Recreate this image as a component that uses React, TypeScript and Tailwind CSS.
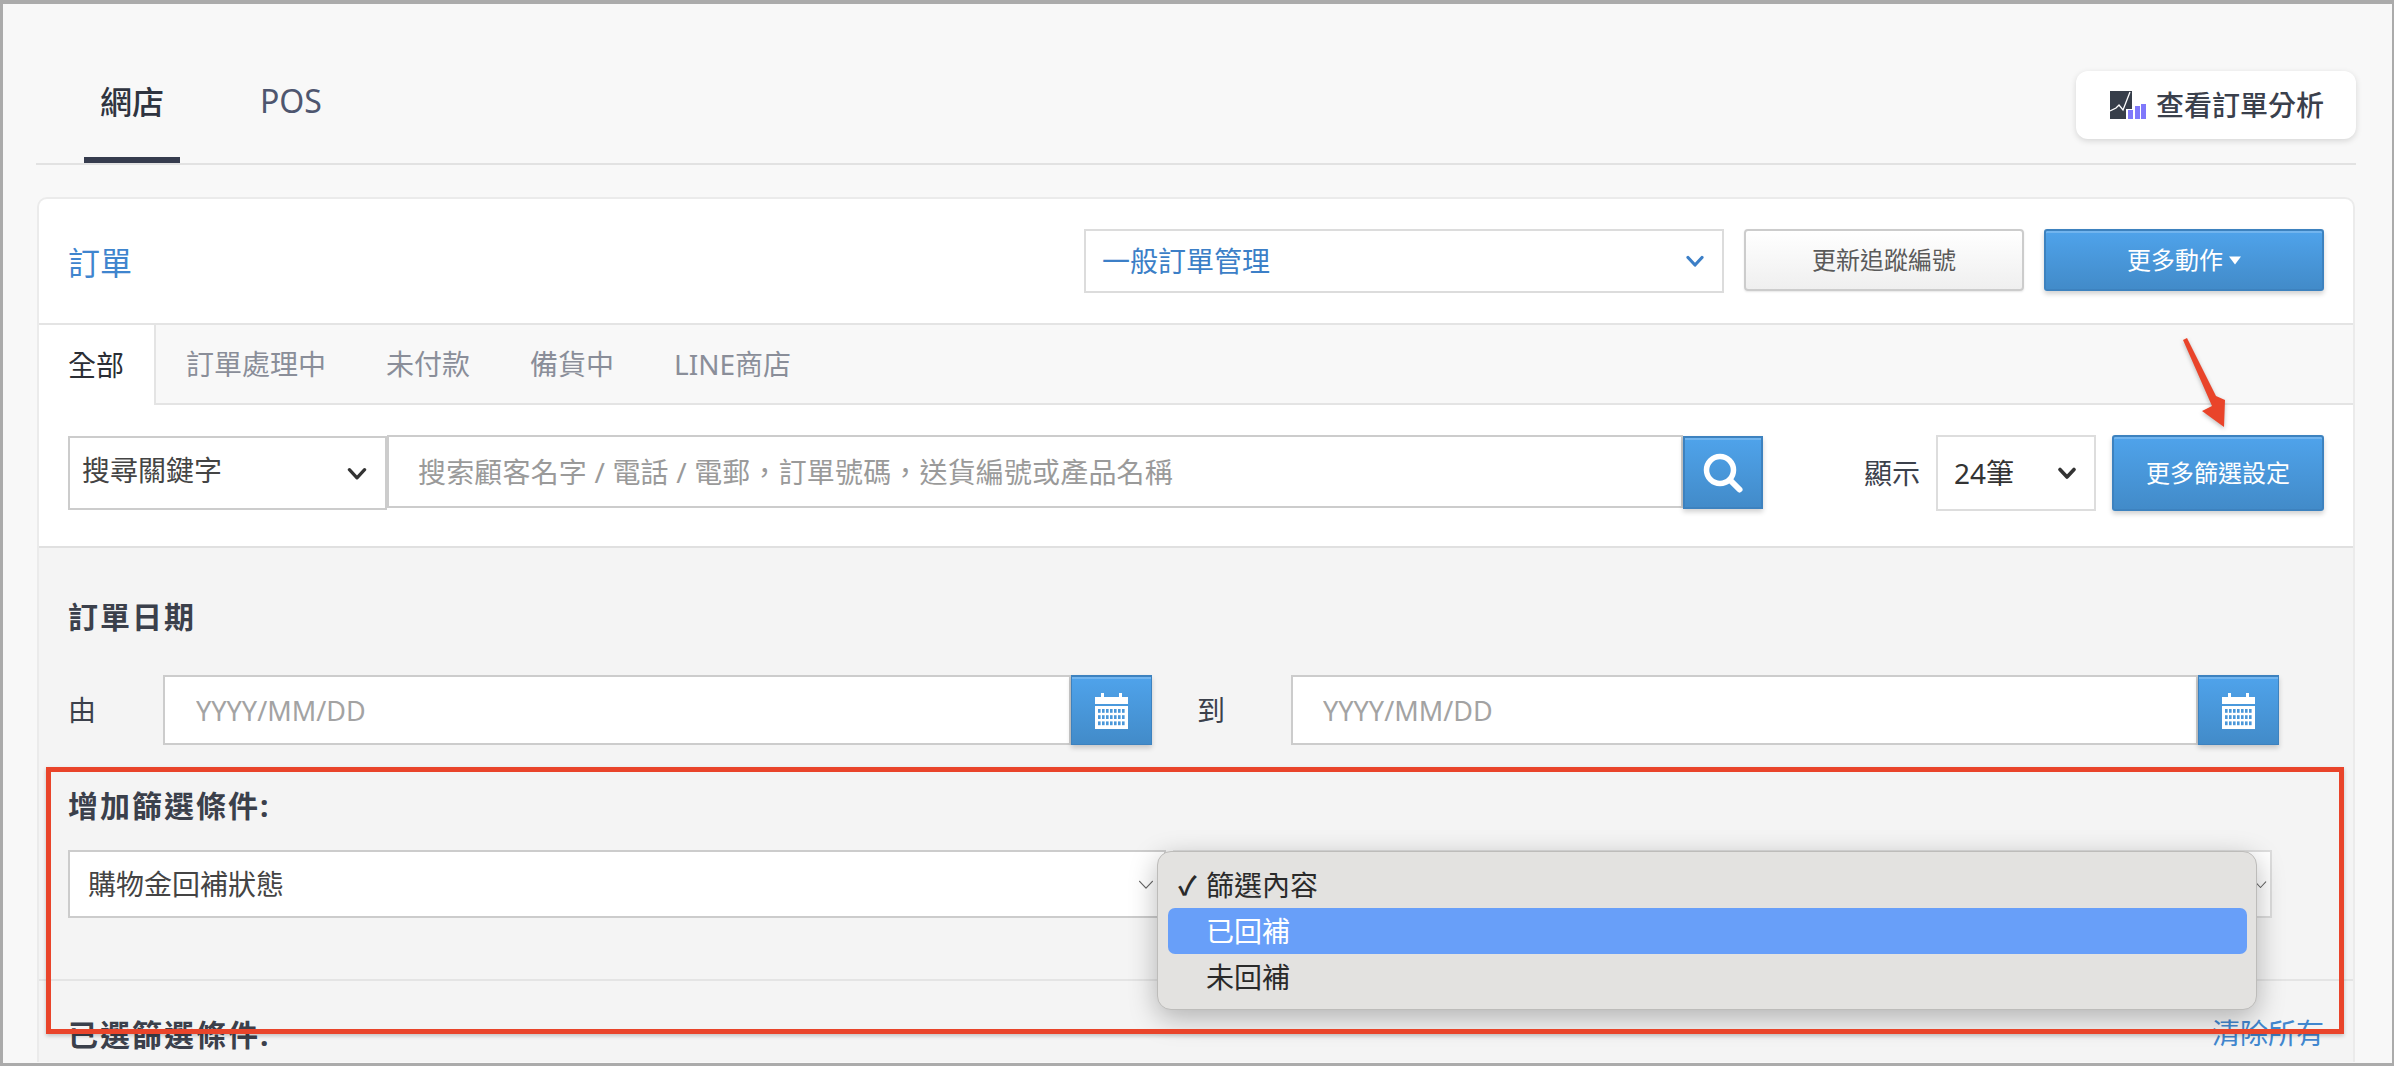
import React from "react";

const blueBtn =
  "box-border rounded-[3px] border-2 border-[#3d82bf] bg-linear-to-b from-[#4fa3eb] to-[#428bc9] text-white shadow-[inset_0_2px_0_rgba(255,255,255,0.2),0_3px_5px_rgba(0,0,0,0.18)] flex items-center justify-center";

function Chevron({ className, stroke = "#333", w = 2.6 }: { className: string; stroke?: string; w?: number }) {
  return (
    <svg viewBox="0 0 18 12" className={className} fill="none" stroke={stroke} strokeWidth={w} strokeLinecap="round" strokeLinejoin="round">
      <path d="M2 2.5 L9 10 L16 2.5" />
    </svg>
  );
}

function CalendarIcon() {
  const cells: React.ReactNode[] = [];
  for (let r = 0; r < 3; r++) {
    for (let c = 0; c < 7; c++) {
      cells.push(<rect key={`${r}-${c}`} x={3 + c * 4} y={16 + r * 6.2} width="2.6" height="3.8" fill="#4a97d9" />);
    }
  }
  return (
    <svg viewBox="0 0 33 36" className="w-[33px] h-[36px]">
      <rect x="6" y="0" width="3" height="6" fill="#fff" />
      <rect x="24" y="0" width="3" height="6" fill="#fff" />
      <path d="M0 4 H33 V11 H0 Z" fill="#fff" />
      <rect x="0" y="13" width="33" height="23" fill="#fff" />
      {cells}
    </svg>
  );
}

function SearchIcon() {
  return (
    <svg viewBox="0 0 42 42" className="w-[42px] h-[42px]" fill="none" stroke="#fff" strokeLinecap="round">
      <circle cx="18" cy="18" r="13.5" strokeWidth="5.5" />
      <path d="M28.5 28.5 L37.5 37.5" strokeWidth="6" />
    </svg>
  );
}

function AnalyticsIcon() {
  return (
    <svg viewBox="0 0 36 28" className="w-[36px] h-[28px] shrink-0">
      <rect x="0" y="0" width="22" height="28" fill="#373e4a" />
      <path d="M0 20 L6 17 L9 14 L13 19 L20 1" fill="none" stroke="#fff" strokeWidth="1.3" />
      <rect x="16" y="18" width="6" height="10" fill="#fff" />
      <rect x="18" y="19" width="5" height="9" fill="#7f78fb" />
      <rect x="25" y="15" width="5" height="13" fill="#7f78fb" />
      <rect x="31" y="13" width="5" height="15" fill="#7f78fb" />
    </svg>
  );
}

function DateInput({ wrap }: { wrap: string }) {
  return (
    <div className="flex">
      <input
        readOnly
        placeholder="YYYY/MM/DD"
        className={`${wrap} box-border h-[70px] border-2 border-[#cccccc] bg-white text-[27px] outline-none placeholder:text-[#a3a3a3]`}
      />
      <div className={`${blueBtn} w-[81px] h-[70px] rounded-none border-[1px] border-t-2`}>
        <CalendarIcon />
      </div>
    </div>
  );
}

export default function App() {
  return (
    <div className="relative box-border w-[2394px] h-[1066px] overflow-hidden bg-[#f8f8f8] border-t-4 border-l-[3px] border-r-2 border-b-[3px] border-[#ababab] text-[#3b404b] [font-family:'Noto_Sans','Noto_Sans_CJK_TC',sans-serif]">
      <div className="ml-[33px] w-[2320px]">
        {/* top nav */}
        <div className="flex justify-between h-[161px] border-b-2 border-[#e2e2e2] box-border">
          <div className="flex pl-[48px]">
            <div className="box-border h-[159px] w-[96px] pt-[76px] border-b-[6px] border-[#363c4e] text-center text-[32px] leading-[44px] font-medium text-[#2f3440]">
              網店
            </div>
            <div className="ml-[80px] pt-[75px] text-[32px] leading-[44px] text-[#4e566f]">POS</div>
          </div>
          <button className="mt-[67px] h-[68px] w-[280px] rounded-[12px] bg-white shadow-[0_2px_6px_rgba(0,0,0,0.14)] flex items-center pl-[34px] gap-[10px] text-[28px] font-medium text-[#3a404c]">
            <AnalyticsIcon />
            <span>查看訂單分析</span>
          </button>
        </div>

        {/* card */}
        <div className="mt-[32px] ml-px box-border w-[2318px] border-x-2 border-t-2 border-[#ebebeb] rounded-t-[10px] bg-white">
          {/* header */}
          <div className="flex items-start box-border h-[126px] border-b-2 border-[#e4e4e4] pt-[30px] pl-[29px] pr-[29px]">
            <div className="flex-1 mt-[2px] text-[32px] leading-[64px] text-[#3f85ce]">訂單</div>
            <div className="box-border flex items-center justify-between w-[640px] h-[64px] border-2 border-[#dcdcdc] bg-white pl-[16px] pr-[18px] text-[28px] text-[#3c7fc7]">
              <span>一般訂單管理</span>
              <Chevron className="w-[18px] h-[12px]" stroke="#3c7fc7" w={3.2} />
            </div>
            <button className="box-border ml-[20px] w-[280px] h-[62px] rounded-[4px] border-2 border-[#cccccc] bg-linear-to-b from-white to-[#efefef] text-[24px] text-[#5a5a5a] shadow-[0_1px_2px_rgba(0,0,0,0.1)]">
              更新追蹤編號
            </button>
            <button className={`${blueBtn} ml-[20px] w-[280px] h-[62px] text-[24px] gap-[6px]`}>
              更多動作
              <svg viewBox="0 0 12 8" className="w-[12px] h-[9px]"><path d="M0 0 H12 L6 8 Z" fill="#fff" /></svg>
            </button>
          </div>

          {/* sub tabs */}
          <div className="flex h-[80px] bg-[#f8f8f8]">
            <div className="box-border w-[117px] h-[80px] bg-white border-r-2 border-[#e4e4e4] pl-[29px] text-[28px] leading-[80px] text-[#2b2e35]">
              全部
            </div>
            <div className="box-border flex flex-1 h-[80px] gap-[60px] border-b-2 border-[#e4e4e4] pl-[30px] text-[28px] leading-[78px] text-[#8a8e99]">
              <span>訂單處理中</span>
              <span>未付款</span>
              <span>備貨中</span>
              <span>LINE商店</span>
            </div>
          </div>

          {/* search row */}
          <div className="flex items-start box-border h-[143px] border-b-2 border-[#e0e0e0] pt-[30px] pl-[29px] pr-[29px]">
            <div className="box-border mt-px flex items-center justify-between w-[319px] h-[74px] border-2 border-[#cccccc] bg-white pl-[12px] pr-[18px] pb-[6px] text-[28px] text-[#444]">
              <span>搜尋關鍵字</span>
              <Chevron className="w-[20px] h-[13px] mt-[6px]" w={3} />
            </div>
            <input
              readOnly
              placeholder="搜索顧客名字 / 電話 / 電郵，訂單號碼，送貨編號或產品名稱"
              className="box-border w-[1296px] h-[73px] border-2 border-[#cccccc] bg-white pl-[29px] text-[28px] tracking-[0.16px] outline-none placeholder:text-[#9a9a9a]"
            />
            <div className={`${blueBtn} mt-px w-[80px] h-[73px] rounded-none`}>
              <SearchIcon />
            </div>
            <div className="ml-auto flex items-start">
              <span className="mr-[16px] text-[28px] leading-[76px]">顯示</span>
              <div className="box-border flex items-center justify-between w-[160px] h-[76px] border-2 border-[#dddddd] bg-white pl-[16px] pr-[18px] text-[28px] text-[#333]">
                <span>24筆</span>
                <Chevron className="w-[18px] h-[12px]" w={3.6} />
              </div>
              <button className={`${blueBtn} ml-[16px] w-[212px] h-[76px] text-[24px]`}>更多篩選設定</button>
            </div>
          </div>

          {/* filters */}
          <div className="bg-[#f4f4f4]">
            <div className="box-border border-b-2 border-[#e4e4e4] pl-[29px] pt-[47px] pb-[61px]">
              <div className="text-[30px] leading-[44px] font-bold tracking-[2px]">訂單日期</div>
              <div className="mt-[36px] flex items-center">
                <span className="w-[95px] text-[28px]">由</span>
                <DateInput wrap="w-[908px] pl-[31px]" />
                <span className="w-[139px] pl-[45px] text-[28px]">到</span>
                <DateInput wrap="w-[907px] pl-[30px]" />
              </div>
              <div className="mt-[39px] text-[30px] leading-[44px] font-bold tracking-[2px]">增加篩選條件:</div>
              <div className="mt-[22px] flex gap-[7px]">
                <div className="box-border flex items-center justify-between w-[1098px] h-[68px] border-2 border-[#cccccc] bg-white pl-[18px] pr-[9px] text-[28px] text-[#444]">
                  <span>購物金回補狀態</span>
                  <Chevron className="w-[18px] h-[11px]" stroke="#666" w={1.3} />
                </div>
                <div className="box-border flex items-center justify-end w-[1099px] h-[68px] border-2 border-[#dddddd] bg-white pr-[2px]">
                  <Chevron className="w-[15px] h-[9px]" stroke="#666" w={1.4} />
                </div>
              </div>
            </div>
            <div className="flex justify-between h-[81px] pl-[29px] pr-[29px] pt-[32px]">
              <span className="text-[30px] leading-[44px] font-bold tracking-[2px]">已選篩選條件:</span>
              <span className="text-[28px] leading-[40px] text-[#4187cf]">清除所有</span>
            </div>
          </div>
        </div>
      </div>

      {/* native select popup */}
      <div className="absolute left-[1154px] top-[847px] box-border w-[1100px] h-[159px] rounded-[14px] border border-[#bdbcba] bg-[#e3e2e0] pt-[10px] pl-[10px] pr-[9px] text-[28px] text-[#2a2a2a] shadow-[0_8px_28px_rgba(0,0,0,0.28)]">
        <div className="relative h-[46px] pl-[38px] leading-[46px]">
          <span className="absolute left-[10px] top-0 text-[26px] font-bold">✓</span>
          篩選內容
        </div>
        <div className="h-[46px] rounded-[7px] bg-[#689ff9] pl-[38px] leading-[46px] text-white">已回補</div>
        <div className="h-[46px] pl-[38px] leading-[46px]">未回補</div>
      </div>

      {/* red annotation box */}
      <div className="absolute left-[43px] top-[763px] box-border w-[2298px] h-[267px] border-[5px] border-[#e9442a] shadow-[0_2px_4px_rgba(0,0,0,0.2)]" />

      {/* red arrow */}
      <svg className="absolute left-[2169px] top-[330px] w-[70px] h-[100px]" viewBox="0 0 70 100" style={{ filter: "drop-shadow(0 2px 2px rgba(0,0,0,0.25))" }}>
        <path d="M11 6 L15 4 L44 62 L53 66 L52 93 L30 77 L40 72 Z" fill="#e9442a" />
      </svg>
    </div>
  );
}
